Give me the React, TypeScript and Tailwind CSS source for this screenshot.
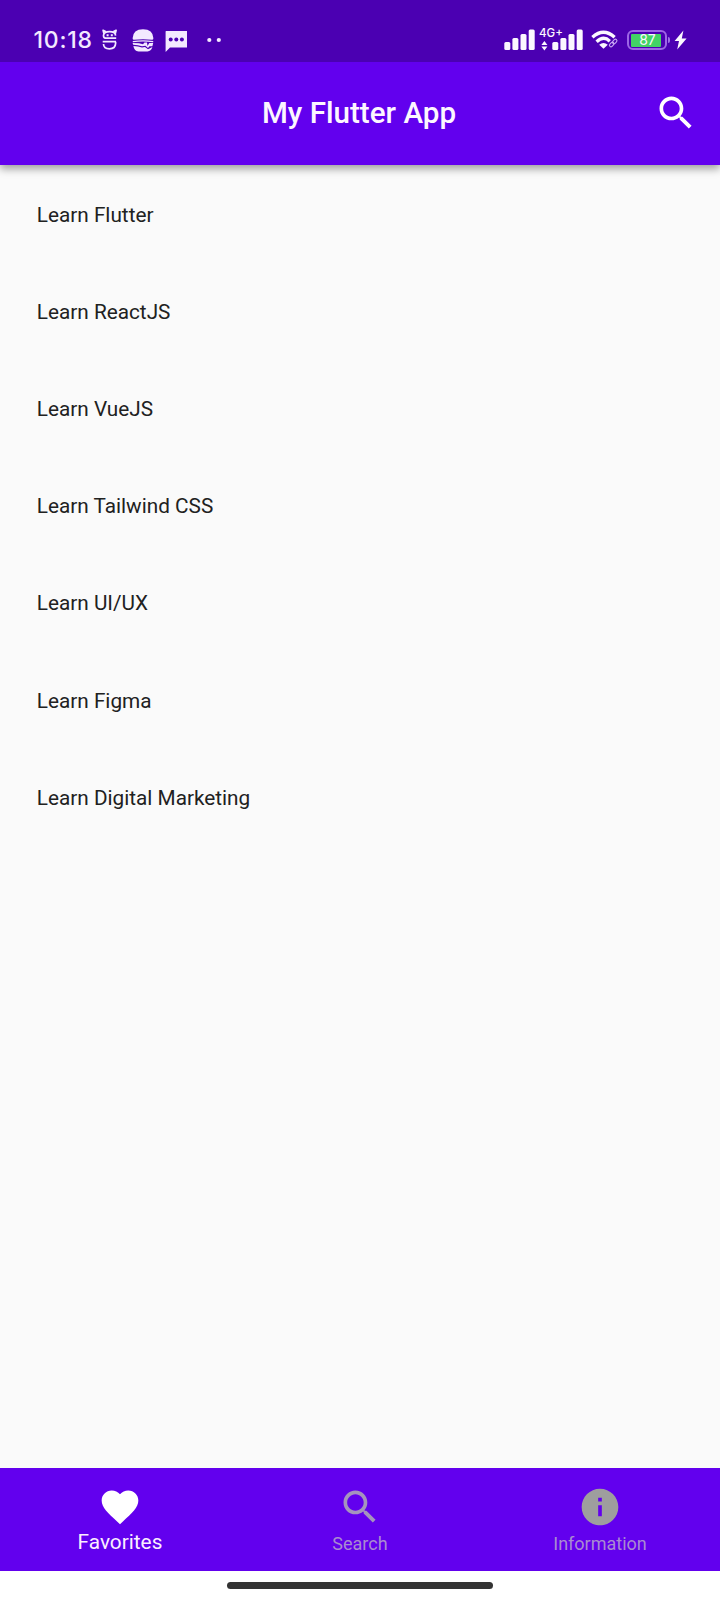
const SEARCH =
  "M15.5 14h-.79l-.28-.27C15.41 12.59 16 11.11 16 9.5 16 5.91 13.09 3 9.5 3S3 5.91 3 9.5 5.91 16 9.5 16c1.61 0 3.09-.59 4.23-1.57l.27.28v.79l5 4.99L20.49 19l-4.99-5zm-6 0C7.01 14 5 11.99 5 9.5S7.01 5 9.5 5 14 7.01 14 9.5 11.99 14 9.5 14z";
const HEART =
  "M12 21.35l-1.45-1.32C5.4 15.36 2 12.28 2 8.5 2 5.42 4.42 3 7.5 3c1.74 0 3.41.81 4.5 2.09C13.09 3.81 14.76 3 16.5 3 19.58 3 22 5.42 22 8.5c0 3.78-3.4 6.86-8.55 11.54L12 21.35z";
const INFO =
  "M12 2C6.48 2 2 6.48 2 12s4.48 10 10 10 10-4.48 10-10S17.52 2 12 2zm1 15h-2v-6h2v6zm0-8h-2V7h2v2z";

const topics = [
  "Learn Flutter",
  "Learn ReactJS",
  "Learn VueJS",
  "Learn Tailwind CSS",
  "Learn UI/UX",
  "Learn Figma",
  "Learn Digital Marketing",
];

function Glyph({ d, className = "" }: { d: string; className?: string }) {
  return (
    <svg viewBox="0 0 24 24" fill="currentColor" className={`size-11 shrink-0 ${className}`}>
      <path d={d} />
    </svg>
  );
}

function Signal() {
  return (
    <svg width="31" height="22" viewBox="0 0 31 22" fill="currentColor" className="shrink-0">
      <rect x="0.3" y="13" width="6" height="8" rx="1.5" />
      <rect x="8.4" y="9" width="6" height="12" rx="1.5" />
      <rect x="16.5" y="5" width="6" height="16" rx="1.5" />
      <rect x="24.7" y="0.6" width="6" height="20.4" rx="1.5" />
    </svg>
  );
}

function StatusBar() {
  return (
    <div className="flex h-[62px] shrink-0 items-start justify-between bg-[#4b00b2] pt-[29px] text-[#f3e9ff]">
      <div className="flex items-start pl-[33.5px]">
        <span className="w-[68.5px] font-[Inter] text-[23px] font-medium leading-[22px] tracking-[0.8px]">10:18</span>
        <svg width="16" height="22" viewBox="0 0 16 22" fill="none" stroke="currentColor" strokeWidth="1.7" className="shrink-0">
          <path d="M14.2 9.2H3.4Q1.5 8.8 1.5 6.4Q1.8 2.6 7.6 2.6Q13.4 2.6 13.6 6.6" />
          <path d="M1.9 4.6L1.1 1.3L4 2.8M13.3 4.6L14.1 1.3L11.2 2.8" strokeLinejoin="round" />
          <path d="M0.7 12.7H14M13.6 12.7V14.4Q13.4 19.8 7.5 19.8Q1.6 19.8 1.5 15" />
          <path d="M4.6 6.2H6.6M8.8 6.2H10.8" strokeWidth="2" />
        </svg>
        <svg width="22" height="23" viewBox="0 0 22 23" fill="currentColor" className="ml-[14px] shrink-0">
          <path d="M0.6 9.2Q1 0.2 11 0.2T21.4 9.2Q21.4 10.8 20 10.8Q11 9.8 2 10.8Q0.6 10.8 0.6 9.2Z" />
          <path d="M0.8 12.7Q11 10.9 21.2 12.7" fill="none" stroke="currentColor" strokeWidth="1.2" />
          <path d="M0.6 13.9L7 14.2L11 15.2L12.5 13.6H15L15.5 17L17.3 14H21.2L20.4 17.2H17.5L16 19L13.4 16.8L10 17.2L6 16.3L1.2 15.8Z" />
          <path d="M1.4 17L6 17.6L10 18.5L13 18L16 20.2L20.4 18Q19 22.4 15.5 22.4H6.5Q2.2 22.4 1.4 17Z" />
        </svg>
        <svg width="23" height="24" viewBox="0 0 23 24" className="ml-[11px] shrink-0">
          <path d="M1 2H22V18.4H5L0.6 23V2.4Z" fill="currentColor" />
          <circle cx="5.7" cy="10.4" r="2" fill="#4b00b2" />
          <circle cx="11.3" cy="10.4" r="2" fill="#4b00b2" />
          <circle cx="16.9" cy="10.4" r="2" fill="#4b00b2" />
        </svg>
        <svg width="16" height="22" viewBox="0 0 16 22" fill="currentColor" className="ml-[18px] shrink-0">
          <circle cx="3.3" cy="11" r="2.1" />
          <circle cx="12.8" cy="11" r="2.1" />
        </svg>
      </div>
      <div className="flex items-start pr-[33px] text-[#fbf7ff]">
        <Signal />
        <div className="-mr-[12px] ml-[4px] flex w-[25px] flex-col">
          <span className="font-[Inter] text-[11.5px] font-medium leading-[9px]">4G+</span>
          <svg width="11" height="12" viewBox="0 0 11 12" fill="currentColor" className="mt-[2px]">
            <path d="M5.4 1L8.4 5H2.4ZM5.4 10.6L2.4 6.6H8.4Z" />
          </svg>
        </div>
        <Signal />
        <svg width="28" height="22" viewBox="0 0 28 22" fill="none" stroke="currentColor" strokeWidth="3.3" className="ml-2 shrink-0">
          <path d="M1.4 8.2Q12.5 -1.8 23.6 8.2" />
          <path d="M5.6 12.8Q12.5 6.2 18.8 12.2" />
          <path d="M12.5 19.8L8.2 15.7Q12.5 12.2 16.8 15.7Z" fill="currentColor" stroke="none" />
          <g stroke="#c9a9f5" strokeWidth="1.1">
            <rect x="18.2" y="14" width="5" height="3" rx="1.5" transform="rotate(-45 20.7 15.5)" />
            <rect x="21.2" y="11" width="5" height="3" rx="1.5" transform="rotate(-45 23.7 12.5)" />
          </g>
        </svg>
        <div className="ml-[8px] mt-px flex h-[20px] w-[40px] items-center rounded-[6px] border-2 border-[#9d66e6] pl-[2px]">
          <div className="flex h-[13px] w-[30px] items-center justify-center rounded-[1px] bg-[#43d365] pl-[3px] font-[Inter] text-[14px] leading-none">
            87
          </div>
        </div>
        <div className="ml-px mt-[8px] h-[6px] w-[2px] rounded-r bg-[#a070e8]" />
        <svg width="13" height="22" viewBox="0 0 13 22" fill="currentColor" className="ml-[4px] shrink-0">
          <path d="M9.4 1.6L0.6 12H5L3.2 20.6L12.6 9.4H7.8Z" />
        </svg>
      </div>
    </div>
  );
}

export default function App() {
  return (
    <div className="flex h-[1600px] w-[720px] flex-col overflow-hidden bg-[#fafafa] font-[Roboto,sans-serif]">
      <header className="z-10 flex shrink-0 flex-col shadow-[0_4px_8px_rgba(0,0,0,0.36)]">
        <StatusBar />
        <div className="grid h-[102.5px] grid-cols-[1fr_auto_1fr] items-center bg-[#6200ee] px-[22px] text-white">
          <h1 className="col-start-2 -ml-px mr-px pt-[2px] text-[29.6px] font-medium leading-none text-[#fdf6ff]">My Flutter App</h1>
          <button className="justify-self-end" aria-label="Search">
            <Glyph d={SEARCH} />
          </button>
        </div>
      </header>
      <ul className="flex flex-1 flex-col pt-[2.1px] text-[20.75px] text-[#212121]">
        {topics.map((t) => (
          <li key={t} className="flex h-[97.2px] items-center pl-[36.8px]">
            {t}
          </li>
        ))}
      </ul>
      <nav className="grid h-[102.5px] shrink-0 grid-cols-3 bg-[#6200ee] text-center">
        <div className="flex flex-col items-center pt-[17px] text-white">
          <Glyph d={HEART} />
          <span className="text-[20.8px] leading-[26px] text-[#fbeeff]">Favorites</span>
        </div>
        <div className="flex flex-col items-center pt-[17px] text-[#a98bd0]">
          <Glyph d={SEARCH} className="text-[#a594bd]" />
          <span className="mt-[2px] text-[18px] leading-[26px]">Search</span>
        </div>
        <div className="flex flex-col items-center pt-[17px] text-[#a98bd0]">
          <Glyph d={INFO} className="text-[#9e9e9e]" />
          <span className="mt-[2px] text-[18px] leading-[26px]">Information</span>
        </div>
      </nav>
      <div className="flex h-[29.5px] shrink-0 justify-center bg-white pt-[11.5px]">
        <div className="h-[7px] w-[266px] rounded-full bg-[#333333]" />
      </div>
    </div>
  );
}
